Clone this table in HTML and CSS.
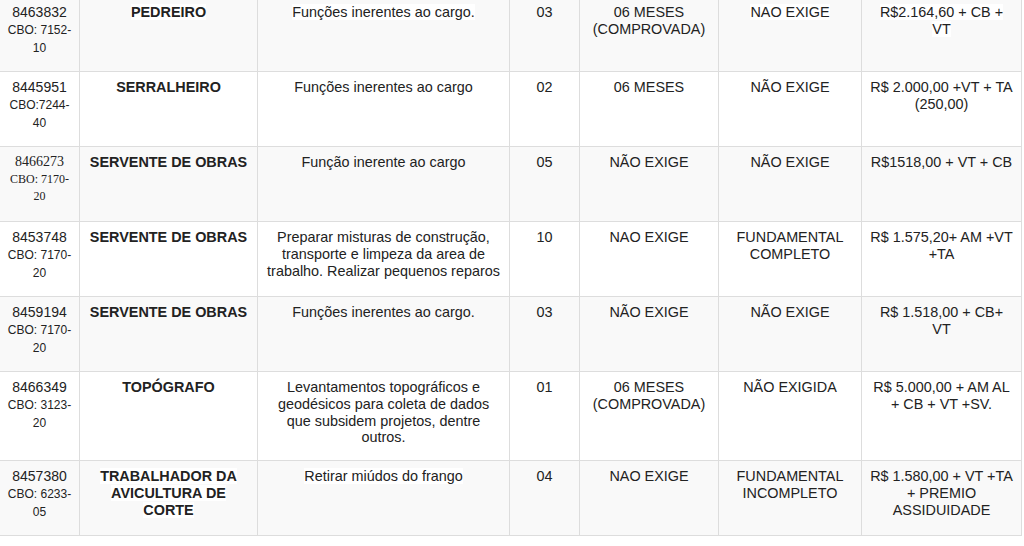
FILE: index.html
```html
<!DOCTYPE html>
<html lang="pt">
<head>
<meta charset="utf-8">
<title>Vagas</title>
<link rel="stylesheet" href="styles.css">
</head>
<body>
<table class="vagas">
  <colgroup>
    <col class="c1"><col class="c2"><col class="c3"><col class="c4"><col class="c5"><col class="c6"><col class="c7">
  </colgroup>
  <tbody>
    <tr>
      <td class="code">8463832<br><span class="cbo">CBO: 7152-10</span></td>
      <td class="job"><span class="hl">PEDREIRO</span></td>
      <td><span class="hl">Funções inerentes ao cargo.</span></td>
      <td>03</td>
      <td>06 MESES (COMPROVADA)</td>
      <td><span class="hl">NAO EXIGE</span></td>
      <td class="pay"><span class="hl">R$2.164,60 + CB + VT</span></td>
    </tr>
    <tr>
      <td class="code">8445951<br><span class="cbo">CBO:7244-40</span></td>
      <td class="job">SERRALHEIRO</td>
      <td>Funções inerentes ao cargo</td>
      <td>02</td>
      <td>06 MESES</td>
      <td>NÃO EXIGE</td>
      <td class="pay">R$ 2.000,00 +VT + TA (250,00)</td>
    </tr>
    <tr>
      <td class="code serif">8466273<br><span class="cbo">CBO: 7170-20</span></td>
      <td class="job">SERVENTE DE OBRAS</td>
      <td>Função inerente ao cargo</td>
      <td>05</td>
      <td>NÃO EXIGE</td>
      <td>NÃO EXIGE</td>
      <td class="pay">R$1518,00 + VT + CB</td>
    </tr>
    <tr>
      <td class="code">8453748<br><span class="cbo">CBO: 7170-20</span></td>
      <td class="job">SERVENTE DE OBRAS</td>
      <td>Preparar misturas de construção, transporte e limpeza da area de trabalho. Realizar pequenos reparos</td>
      <td>10</td>
      <td>NAO EXIGE</td>
      <td>FUNDAMENTAL COMPLETO</td>
      <td class="pay">R$ 1.575,20+ AM +VT +TA</td>
    </tr>
    <tr>
      <td class="code">8459194<br><span class="cbo">CBO: 7170-20</span></td>
      <td class="job">SERVENTE DE OBRAS</td>
      <td>Funções inerentes ao cargo.</td>
      <td>03</td>
      <td>NÃO EXIGE</td>
      <td>NÃO EXIGE</td>
      <td class="pay">R$ 1.518,00 + CB+ VT</td>
    </tr>
    <tr>
      <td class="code">8466349<br><span class="cbo">CBO: 3123-20</span></td>
      <td class="job">TOPÓGRAFO</td>
      <td>Levantamentos topográficos e geodésicos para coleta de dados que subsidem projetos, dentre outros.</td>
      <td>01</td>
      <td>06 MESES (COMPROVADA)</td>
      <td>NÃO EXIGIDA</td>
      <td class="pay">R$ 5.000,00 + AM AL + CB + VT +SV.</td>
    </tr>
    <tr>
      <td class="code">8457380<br><span class="cbo">CBO: 6233-05</span></td>
      <td class="job"><span class="hl">TRABALHADOR DA AVICULTURA DE CORTE</span></td>
      <td><span class="hl">Retirar miúdos do frango</span></td>
      <td>04</td>
      <td>NAO EXIGE</td>
      <td>FUNDAMENTAL INCOMPLETO</td>
      <td class="pay">R$ 1.580,00 + VT +TA + PREMIO ASSIDUIDADE</td>
    </tr>
  </tbody>
</table>
</body>
</html>
```

FILE: styles.css
```css
html, body {
  margin: 0;
  padding: 0;
  background: #ffffff;
}

body {
  font-family: "Liberation Sans", Arial, sans-serif;
  font-size: 14.4px;
  line-height: 16.8px;
  color: #222222;
}

.vagas {
  border-collapse: collapse;
  table-layout: fixed;
  width: 1022px;
  margin: -4px 0 0 -1px;
}

.c1 { width: 80px; }
.c2 { width: 178px; }
.c3 { width: 252px; }
.c4 { width: 70px; }
.c5 { width: 139px; }
.c6 { width: 143px; }
.c7 { width: 160px; }

.vagas tr {
  height: 75px;
}

.vagas tr:nth-child(odd) td {
  background: #f9f9f9;
}

.vagas td {
  border: 1px solid #dddddd;
  padding: 7px 8px 14px;
  text-align: center;
  vertical-align: top;
}

.vagas td.code {
  padding-left: 7px;
  padding-right: 7px;
  font-size: 14px;
}

.vagas td.pay {
  padding-left: 7px;
  padding-right: 7px;
}

.cbo {
  font-size: 12px;
}

.serif {
  font-family: "Liberation Serif", "Times New Roman", serif;
}

.job {
  font-weight: bold;
}

.hl {
  background: #ffffff;
}
```
